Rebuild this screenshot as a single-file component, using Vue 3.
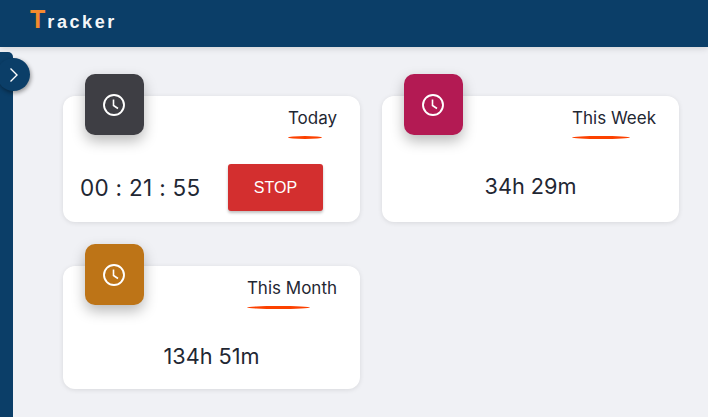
<template>
  <div class="page">
    <header class="topbar">
      <span class="logo"><span class="logo-t">T</span>racker</span>
    </header>
    <div class="body-row">
      <aside class="sidebar">
        <button class="toggle">
          <svg width="16" height="16" viewBox="0 0 16 16" fill="none" stroke="#fff" stroke-width="1.4">
            <path d="M4.5 1.5 L11 8 L4.5 14.5" />
          </svg>
        </button>
      </aside>
      <main class="cards">
        <section v-for="card in cards" :key="card.title" class="card">
          <div class="card-top">
            <div class="badge" :class="card.tone">
              <svg width="24" height="24" viewBox="0 0 24 24" fill="none" stroke="#fff" stroke-width="1.9">
                <circle cx="12" cy="12" r="10" />
                <path d="M11.5 6.5 V12.5 L16 15.5" stroke-width="1.6" />
              </svg>
            </div>
            <div class="title-wrap">
              <span class="title">{{ card.title }}</span>
              <span class="underline" :style="{ width: card.line + 'px' }"></span>
            </div>
          </div>
          <div v-if="card.running" class="timer-row">
            <span class="timer">00 : 21 : 55</span>
            <button class="stop">STOP</button>
          </div>
          <div v-else class="total">{{ card.total }}</div>
        </section>
      </main>
    </div>
  </div>
</template>

<script setup>
const cards = [
  { title: 'Today', tone: 'dark', line: 34, running: true },
  { title: 'This Week', tone: 'pink', line: 58, total: '34h 29m' },
  { title: 'This Month', tone: 'amber', line: 63, total: '134h 51m' }
]
</script>

<style>
html, body {
  margin: 0;
  background: #f0f1f5;
  overflow: hidden;
}
</style>

<style scoped>
.page {
  width: 708px;
  height: 417px;
  overflow: hidden;
  font-family: Inter, "Liberation Sans", sans-serif;
  color: #1f2733;
  background: #f0f1f5;
}
.topbar {
  height: 47px;
  background: #0b3e68;
  padding-left: 30px;
  display: flex;
  align-items: center;
  box-shadow: 0 2px 6px rgba(0, 0, 0, 0.12);
  position: relative;
}
.logo {
  font-family: "Liberation Sans", sans-serif;
  font-weight: 700;
  font-size: 18px;
  letter-spacing: 2.6px;
  color: #f4f6f8;
  margin-top: -8px;
}
.logo-t {
  color: #f58a2e;
  font-size: 25px;
  letter-spacing: 2px;
}
.body-row {
  display: flex;
  height: 370px;
}
.sidebar {
  width: 13px;
  margin-top: 5px;
  background: #0b3e68;
  border-top-right-radius: 5px;
  position: relative;
  flex-shrink: 0;
}
.toggle {
  position: absolute;
  left: -3px;
  top: 6px;
  width: 33px;
  height: 33px;
  border: 0;
  padding: 0;
  border-radius: 50%;
  background: #0b3e68;
  box-shadow: 1px 2px 4px rgba(0, 0, 0, 0.4);
  display: flex;
  align-items: center;
  justify-content: center;
}
.cards {
  display: grid;
  grid-template-columns: 297px 297px;
  grid-auto-rows: min-content;
  column-gap: 22px;
  row-gap: 44px;
  padding: 49px 0 0 50px;
}
.card {
  background: #fff;
  border-radius: 12px;
  box-shadow: 0 1px 5px rgba(0, 0, 0, 0.1);
  height: 126px;
  display: flex;
  flex-direction: column;
}
.card:nth-child(3) {
  height: 123px;
}
.card-top {
  display: flex;
  justify-content: space-between;
  padding: 0 23px 0 22px;
  height: 68px;
}
.badge {
  width: 59px;
  height: 61px;
  margin-top: -22px;
  border-radius: 10px;
  display: flex;
  align-items: center;
  justify-content: center;
  box-shadow: 0 6px 14px rgba(0, 0, 0, 0.28);
}
.badge svg {
  margin-right: 1px;
}
.dark { background: #3e3e44; }
.pink { background: #b31a53; }
.amber { background: #bd7417; }
.title-wrap {
  display: flex;
  flex-direction: column;
  align-items: flex-start;
  padding-top: 12px;
}
.title {
  font-size: 17px;
  line-height: 20px;
}
.underline {
  height: 3px;
  margin-top: 8px;
  background: #fc4100;
  border-radius: 50%;
}
.timer-row {
  display: flex;
  align-items: center;
  padding-left: 17px;
  gap: 28px;
}
.timer {
  font-size: 22.5px;
  letter-spacing: 0.3px;
  width: 120px;
  white-space: nowrap;
}
.stop {
  width: 95px;
  height: 47px;
  background: #d32f2f;
  color: #fff;
  border: 0;
  border-radius: 3px;
  font-family: "Liberation Sans", sans-serif;
  font-size: 16px;
  box-shadow: 0 2px 3px rgba(0, 0, 0, 0.25);
}
.total {
  text-align: center;
  font-size: 21.7px;
  line-height: 26px;
  margin-top: 9px;
}
</style>
